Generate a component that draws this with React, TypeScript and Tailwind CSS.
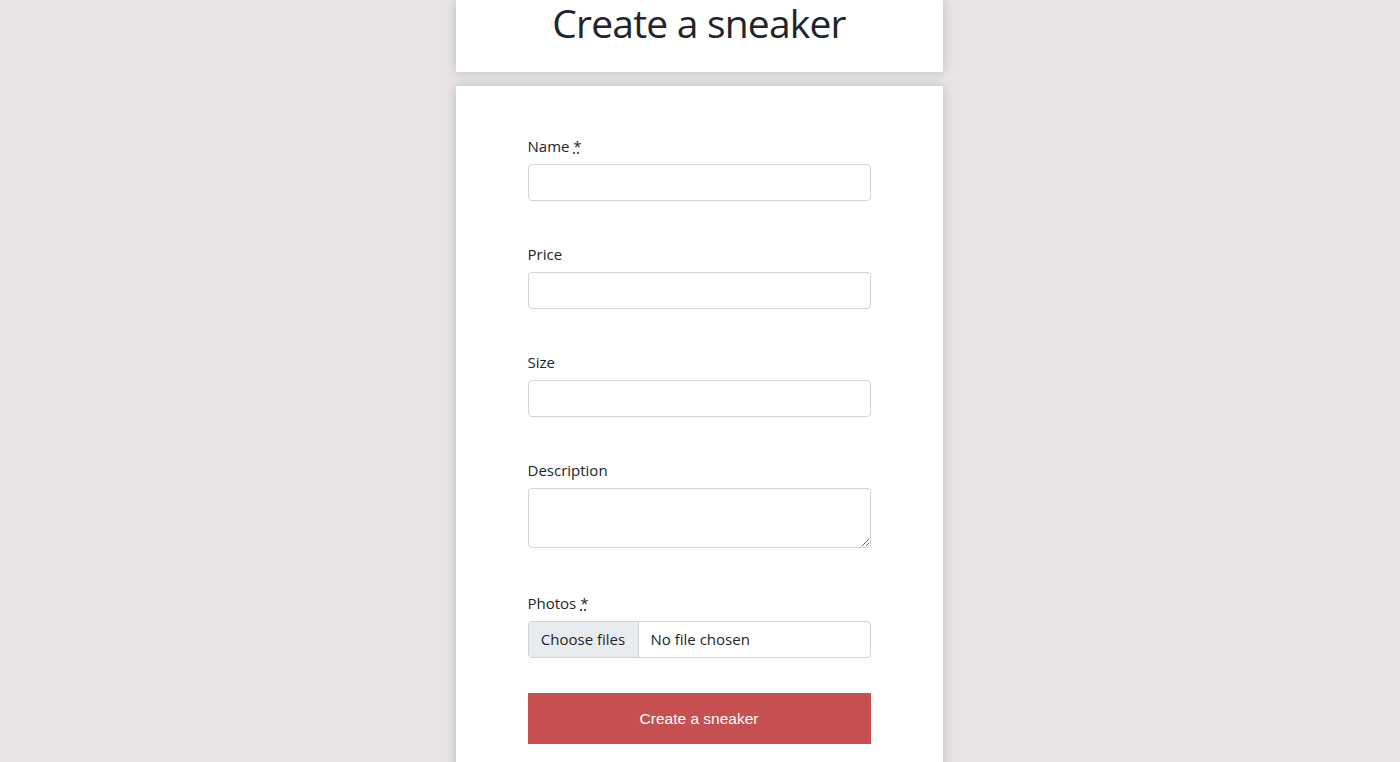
const FIELDS = [
  { label: "Name", required: true, kind: "input" },
  { label: "Price", required: false, kind: "input" },
  { label: "Size", required: false, kind: "input" },
  { label: "Description", required: false, kind: "textarea" },
];

const Label = ({ text, required }: { text: string; required?: boolean }) => (
  <label className="block text-[15px] leading-[24px] text-[#212529] mb-[6px]">
    {text}
    {required && (
      <>
        {" "}
        <abbr title="required">*</abbr>
      </>
    )}
  </label>
);

export default function App() {
  return (
    <div
      className="min-h-[762px] bg-[#e8e4e3] flex flex-col items-center"
      style={{ fontFamily: '"Open Sans", "Noto Sans", sans-serif' }}
    >
      {/* Title card */}
      <div className="w-[487px] -translate-x-px h-[72px] bg-white shadow-[0_0_10px_rgba(0,0,0,0.18)] flex justify-center">
        <h1 className="text-[39px] leading-[46px] text-[#212529] tracking-[-0.8px]">Create a sneaker</h1>
      </div>

      {/* Form card */}
      <div className="w-[487px] -translate-x-px mt-[14px] flex-1 bg-white shadow-[0_0_10px_rgba(0,0,0,0.18)] px-[72px] pt-[48px] pb-10">
        <form>
          {FIELDS.map((f) => (
            <div key={f.label} className="mb-[41px]">
              <Label text={f.label} required={f.required} />
              {f.kind === "input" ? (
                <input
                  type="text"
                  className="block w-full h-[37px] rounded-[4px] border border-[#ced4da] bg-white px-3"
                />
              ) : (
                <textarea className="block w-full h-[60px] rounded-[4px] border border-[#ced4da] bg-white px-3 py-1.5" />
              )}
            </div>
          ))}

          <div className="mb-[35px] mt-[43px]">
            <Label text="Photos" required />
            <div className="flex h-[37px] w-full rounded-[4px] border border-[#ced4da] overflow-hidden text-[15px] text-[#212529]">
              <div className="w-[110px] shrink-0 bg-[#e9ecef] border-r border-[#ced4da] flex items-center justify-center">
                Choose files
              </div>
              <div className="flex items-center pl-3">No file chosen</div>
            </div>
          </div>

          <button
            type="button"
            className="w-full h-[51px] bg-[#c64f51] text-white text-[15.5px]"
            style={{ fontFamily: '"Liberation Sans", Arial, sans-serif' }}
          >
            Create a sneaker
          </button>
        </form>
      </div>
    </div>
  );
}
